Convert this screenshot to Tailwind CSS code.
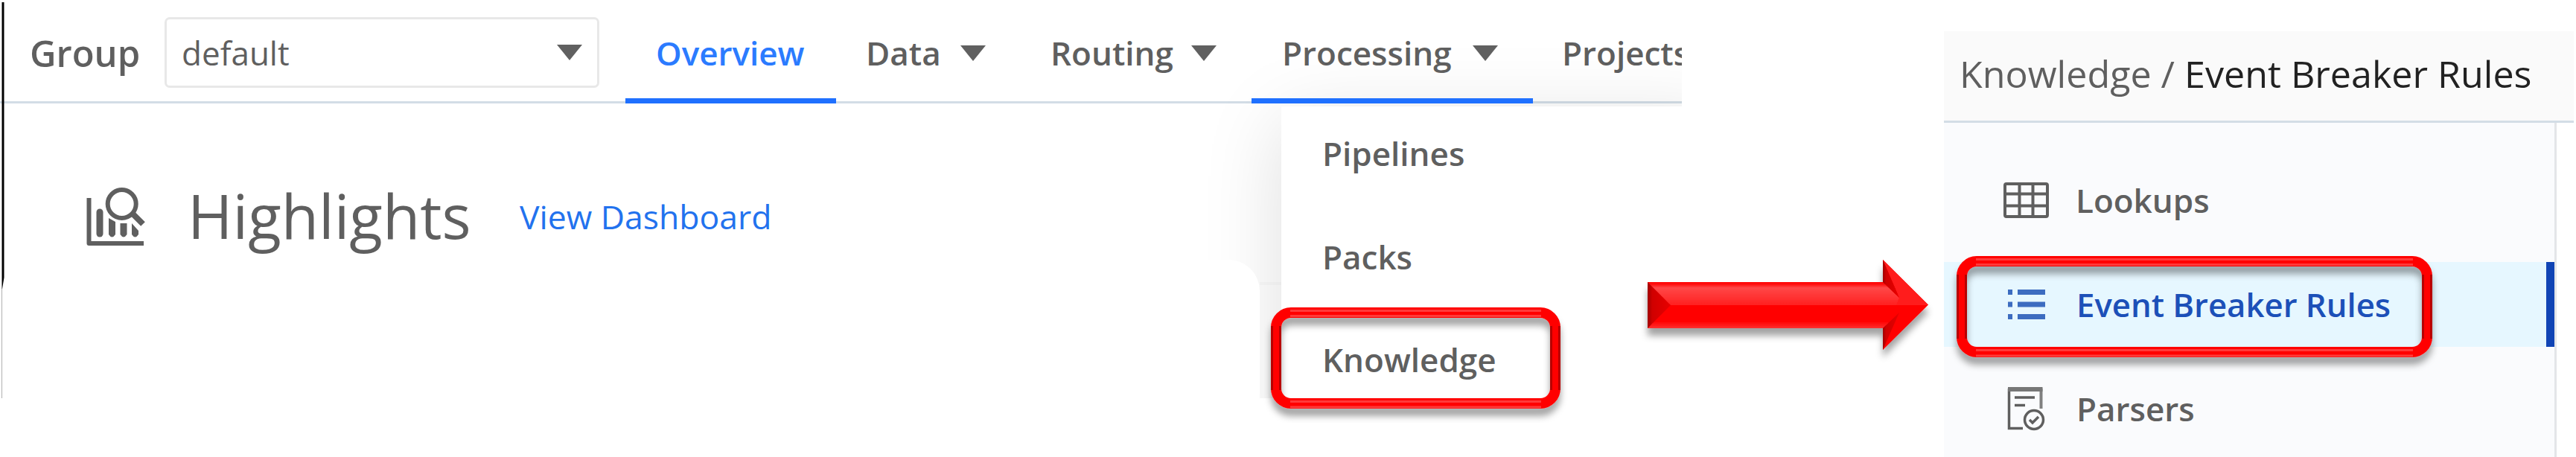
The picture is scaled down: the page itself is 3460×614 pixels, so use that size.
<!DOCTYPE html>
<html lang="en">
<head>
<meta charset="utf-8">
<title>Group overview</title>
<script src="https://cdn.jsdelivr.net/npm/@tailwindcss/browser@4"></script>
</head>
<body class="relative flex h-[614px] w-[3460px] overflow-hidden bg-white font-['Open_Sans','Noto_Sans',sans-serif] text-[#5f5f5f]">

<!-- Group page -->
<section class="relative mt-[3px] h-[532px] w-[2259px] shrink-0 overflow-hidden">
  <header class="flex h-[136px] items-stretch border-b-[3px] border-[#d3dde6] pl-[40px] whitespace-nowrap text-[44px] leading-[136px] font-semibold">
    <span class="mr-[29px] w-[152px] shrink-0 text-[49px]">Group</span>
    <div class="mt-[20px] mr-[35px] flex h-[95px] w-[584px] shrink-0 items-center justify-between rounded-[7px] border-[3px] border-[#e8e8e8] pr-[20px] pl-[20px] leading-[88px] font-normal">
      <span>default</span>
      <svg class="h-[21px] w-[34px]" viewBox="0 0 34 21"><path d="M0 0H34L17 21Z" fill="#606060"/></svg>
    </div>
    <nav class="flex shrink-0">
      <a class="z-10 h-[136px] w-[283px] shrink-0 border-b-[7px] border-[#1f70ff] pl-[41px] text-[#2b7bff]">Overview</a>
      <a class="flex w-[248px] shrink-0 items-start pl-[40px]"><span class="w-[127px]">Data</span><svg class="mt-[58px] h-[21px] w-[34px]" viewBox="0 0 34 21"><path d="M0 0H34L17 21Z" fill="#606060"/></svg></a>
      <a class="flex w-[310px] shrink-0 items-start pl-[40px]"><span class="w-[189px]">Routing</span><svg class="mt-[58px] h-[21px] w-[34px]" viewBox="0 0 34 21"><path d="M0 0H34L17 21Z" fill="#606060"/></svg></a>
      <a class="z-10 flex h-[136px] w-[378px] shrink-0 items-start border-b-[7px] border-[#1f70ff] pl-[41px]"><span class="w-[256px]">Processing</span><svg class="mt-[58px] h-[21px] w-[34px]" viewBox="0 0 34 21"><path d="M0 0H34L17 21Z" fill="#606060"/></svg></a>
      <a class="shrink-0 pl-[39px]">Projects</a>
    </nav>
  </header>
  <main class="flex h-[300px] items-start pt-[102px] pl-[116px] whitespace-nowrap">
    <svg class="mt-[11px] mr-[56px] h-[80px] w-[80px] shrink-0" viewBox="0 0 80 80" fill="none" stroke="#5f5f5f">
      <path d="M3.500 14V75H77" stroke-width="6" stroke-linejoin="round"/>
      <path d="M18 33V62" stroke-width="9" stroke-linecap="round"/>
      <path d="M30 41L39 46V63Q34.500 70 30 63ZM45.500 48H54.500V63Q50 70 45.500 63ZM61 48L70 58V63Q65.500 70 61 63Z" fill="#5f5f5f" stroke="none"/>
      <circle cx="47.700" cy="22" r="19" stroke-width="6"/>
      <path d="M61 34L76 49" stroke-width="8"/>
    </svg>
    <h1 class="w-[446px] shrink-0 text-[82px] leading-[96px]">Highlights</h1>
    <a class="mt-[2px] text-[44.5px] leading-[96px] text-[#2272ee]">View Dashboard</a>
  </main>
  <!-- Processing menu -->
  <div class="absolute top-[140px] left-[1600px] h-[392px] w-[659px]">
    <ul class="absolute top-0 left-[121px] h-[480px] w-[600px] bg-white pt-[15px] pl-[55px] text-[44px] leading-[96px] font-semibold shadow-[0_20px_100px_rgba(0,0,0,0.13)]">
      <li class="mb-[43px]">Pipelines</li><li class="mb-[42px]">Packs</li><li>Knowledge</li>
    </ul>
    <div class="absolute top-[236px] left-[92px] h-[4px] w-[29px] bg-black/2"></div>
    <div class="absolute top-[206px] -left-[100px] h-[200px] w-[192px] rounded-tr-[42px] bg-white"></div>
  </div>
</section>

<!-- Knowledge page -->
<section class="mt-[42px] ml-[352px] flex h-[572px] w-[846px] shrink-0 flex-col whitespace-nowrap">
  <header class="h-[123px] border-b-[3px] border-[#d3dde6] bg-[#fafafa] pl-[21px] text-[50.2px] leading-[114px]">Knowledge / <span class="text-[#222]">Event Breaker Rules</span></header>
  <ul class="h-[449px] w-[823px] border-r-[3px] border-[#e3e5e8] bg-[#fafbfd] pt-[47px] text-[44px] leading-[114px] font-semibold">
    <li class="mb-[26px] flex h-[114px] items-center pl-[80px]">
      <svg class="mr-[36px] h-[48px] w-[61px]" viewBox="0 0 61 48" fill="none" stroke="#5f5f5f"><rect x="2" y="2" width="57" height="44" rx="2" stroke-width="4"/><path d="M2 15.500H59M2 31.500H59M21.500 2V46M39.500 2V46" stroke-width="4"/></svg>Lookups</li>
    <li class="mb-[26px] flex h-[114px] items-center border-r-[11px] border-[#1044b5] bg-[#e6f7ff] pl-[86px] text-[43.7px] text-[#1c50b8]">
      <svg class="mr-[42px] h-[40px] w-[50px]" viewBox="0 0 50 40" fill="#3c6cc0"><path d="M0 0h6v7H0zM13 0h37v7H13zM0 16.500h6v7H0zM13 16.500h37v7H13zM0 33h6v7H0zM13 33h37v7H13z"/></svg>Event Breaker Rules</li>
    <li class="flex h-[114px] items-center pl-[85px]">
      <svg class="mr-[41px] h-[60px] w-[52px]" viewBox="0 0 52 60" fill="none" stroke="#5f5f5f" stroke-width="3.500"><path d="M2.500 3V56.500H21M10 15H37M10 25.500H24"/><path d="M45.500 30V3" stroke="#808080" stroke-width="4"/><path d="M1 4H47.500" stroke="#777" stroke-width="6"/><circle cx="36" cy="45" r="12.500"/><path d="M30 45L34 49L42 41"/></svg>Parsers</li>
  </ul>
</section>

<!-- Annotations -->
<svg class="absolute inset-0 h-[614px] w-[3460px]" viewBox="0 0 3460 614">
  <defs>
    <filter id="sh" x="-10%" y="-20%" width="120%" height="160%"><feDropShadow dx="0" dy="10" stdDeviation="5" flood-color="#000" flood-opacity="0.36"/></filter>
    <linearGradient id="top" x2="0" y2="1"><stop offset="0" stop-color="#f00"/><stop offset=".1" stop-color="#f11"/><stop offset=".25" stop-color="#ff4848"/><stop offset="1" stop-color="#ff2020"/></linearGradient>
    <linearGradient id="bot" x2="0" y2="1"><stop offset="0" stop-color="#f00"/><stop offset=".7" stop-color="#f00"/><stop offset="1" stop-color="#ff3030"/></linearGradient>
    <linearGradient id="dark"><stop offset="0" stop-color="#a00000"/><stop offset=".2" stop-color="#d00000"/><stop offset="1" stop-color="#e80000"/></linearGradient>
  </defs>
  <path d="M2.500 3H5.500V373L3 388H2.500Z" fill="#000"/><path d="M2.500 388V535" stroke="#b0b0b0"/>
  <g filter="url(#sh)">
    <path d="M2213 379H2529V349L2590 409.500L2529 470V441H2213Z" fill="#f00"/>
    <path d="M2213 379H2529L2551 400V410H2213Z" fill="url(#top)"/>
    <path d="M2213 410H2551V420L2529 441H2213Z" fill="url(#bot)"/>
    <path d="M2529 349L2590 410H2547L2551 400Z" fill="#ff1c1c"/>
    <path d="M2213 379L2244 410L2213 441Z" fill="url(#dark)"/>
    <path d="M2529 349L2551 400L2529 379ZM2529 470L2551 420L2529 441Z" fill="url(#dark)"/>
  </g>
  <g fill="none" filter="url(#sh)">
    <rect x="1714" y="420" width="375" height="122" rx="20" stroke="#f00" stroke-width="14"/>
    <rect x="2635" y="351" width="625" height="122" rx="20" stroke="#f00" stroke-width="14"/>
  </g>
  <g fill="none" stroke="#b80000" stroke-width="3">
    <path d="M1708.500 524V438M1719.500 524V438M2083.500 524V438M2094.500 524V438M2629.500 455V369M2640.500 455V369M3254.500 455V369M3265.500 455V369"/>
  </g>
  <g fill="none" stroke="#ff3a3a" stroke-width="3">
    <path d="M1733 417.500H2070M1733 424.500H2070M1733 539.500H2070M1733 547H2070M2654 348.500H3241M2654 355.500H3241M2654 470.500H3241M2654 478H3241"/>
  </g>
</svg>
</body>
</html>
